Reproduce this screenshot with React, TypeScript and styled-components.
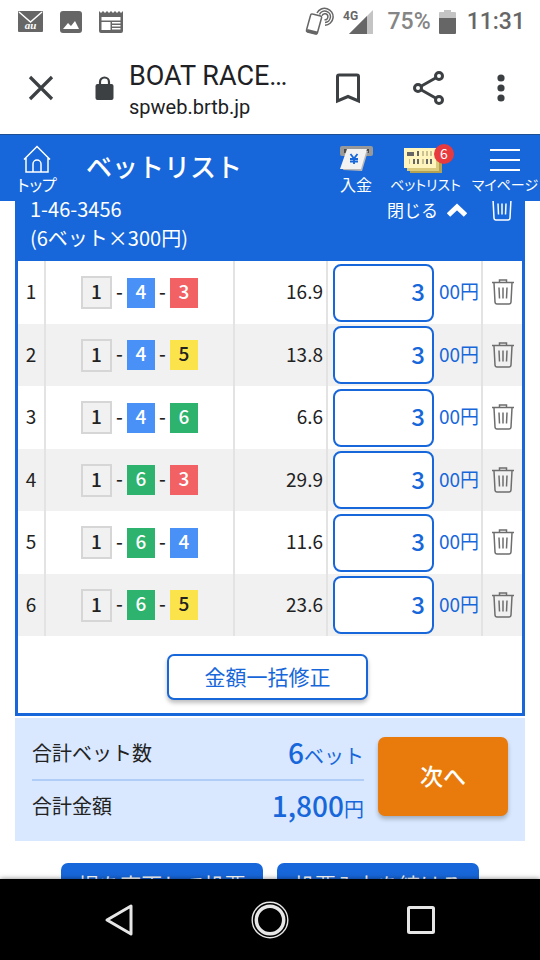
import React, { useState } from 'react';
import styled, { createGlobalStyle } from 'styled-components';

const BLUE = '#1767da';

const Global = createGlobalStyle`
  * { box-sizing: border-box; }
  body { margin: 0; background: #fff; }
  body, button, input {
    font-family: 'Noto Sans CJK JP', 'Noto Sans', sans-serif;
  }
  button { padding: 0; cursor: pointer; }
  svg { display: block; flex: none; }
`;

const Screen = styled.div`
  display: flex;
  flex-direction: column;
  height: 100vh;
  overflow: hidden;
  color: #222;
`;

const StatusBar = styled.div`
  display: flex;
  align-items: center;
  justify-content: space-between;
  height: 43px;
  padding: 0 15px 0 18px;
  flex: none;
  font: 500 23px/28px Roboto, sans-serif;
  color: #666;
`;

const StatusGroup = styled.div<{ $gap: number }>`
  display: flex;
  align-items: center;
  gap: ${(p) => p.$gap}px;
`;

const Percent = styled.span`
  margin-left: 6px;
  color: #858585;
`;

const Clock = styled.span`
  margin-left: 3px;
`;

const BrowserBar = styled.div`
  display: flex;
  align-items: center;
  height: 92px;
  padding: 0 35px 0 24px;
  flex: none;
  border-bottom: 1px solid #1d4f94;
  color: #3c4043;
`;

const IconButton = styled.button`
  display: flex;
  align-items: center;
  justify-content: center;
  border: 0;
  background: none;
  color: inherit;
`;

const Address = styled.div`
  display: flex;
  align-items: center;
  flex: 1;
  min-width: 0;
  gap: 15px;
  margin-left: 37px;
`;

const AddressText = styled.div`
  padding-top: 4px;
  font-family: Roboto, sans-serif;
  color: #202124;
`;

const PageName = styled.div`
  font-size: 27px;
  line-height: 32px;
  white-space: nowrap;
`;

const Domain = styled.div`
  font-size: 20px;
  line-height: 30px;
`;

const BrowserActions = styled.div`
  display: flex;
  align-items: center;
  gap: 51px;
`;

const AppHeader = styled.header`
  display: flex;
  align-items: stretch;
  height: 66px;
  padding-left: 16px;
  flex: none;
  background: ${BLUE};
  color: #fff;
`;

const AppTitle = styled.h1`
  flex: 1;
  margin: 0;
  padding-left: 28px;
  font-size: 26px;
  line-height: 62px;
  font-weight: 500;
  white-space: nowrap;
`;

const HeaderLink = styled.a<{ $width: number; $compact?: boolean }>`
  display: flex;
  flex-direction: column;
  align-items: center;
  justify-content: flex-end;
  width: ${(p) => p.$width}px;
  padding-bottom: 6px;
  color: #fff;
  font-size: ${(p) => (p.$compact ? 14 : 16)}px;
  line-height: 22px;
  font-feature-settings: 'palt';
  text-decoration: none;
  white-space: nowrap;
`;

const IconSlot = styled.span`
  position: relative;
  display: flex;
  align-items: center;
  height: 28px;
`;

const TicketSlot = styled(IconSlot)`
  align-items: flex-end;
  padding-right: 5px;
`;

const Badge = styled.span`
  position: absolute;
  top: -1px;
  right: -7px;
  width: 20px;
  height: 20px;
  border-radius: 50%;
  background: #e63a3e;
  font: 14px/18px 'Noto Sans CJK JP', sans-serif;
  text-align: center;
`;

const Main = styled.main`
  flex: 1;
  min-height: 0;
  overflow: hidden;
  padding: 0 15px;
`;

const Card = styled.section`
  border: 3px solid ${BLUE};
  border-top: 0;
`;

const CardHeader = styled.div`
  display: flex;
  align-items: flex-start;
  height: 60px;
  padding: 0 9px 0 12px;
  background: ${BLUE};
  color: #fff;
`;

const BetName = styled.div`
  display: flex;
  flex-direction: column;
  flex: 1;
  gap: 14px;
  font-size: 20px;
  line-height: 15px;
`;

const CloseButton = styled(IconButton)`
  gap: 9px;
  margin-right: 24px;
  font-size: 17px;
  line-height: 18px;
`;

const DeleteAll = styled(IconButton)`
  height: 21px;
  align-items: flex-end;
`;

const BetTable = styled.table`
  width: 100%;
  table-layout: fixed;
  border-collapse: collapse;
  font-size: 19px;
  line-height: 28px;
`;

const Row = styled.tr`
  height: 63px;
  &:nth-child(even) {
    height: 62px;
    background: #f1f1f1;
  }
`;

const Cell = styled.td<{ $align?: string }>`
  padding: 0;
  text-align: ${(p) => p.$align || 'center'};
  & + & { border-left: 2px solid #e3e3e3; }
`;

const Figure = styled.div`
  padding: 0 3px 3px;
`;

const Combo = styled.div`
  display: flex;
  align-items: center;
  justify-content: center;
`;

const Dash = styled.span`
  width: 15px;
  padding-bottom: 4px;
  font-weight: 500;
  text-align: center;
`;

const palette: Record<string, string> = {
  '1': '#f1f1f1',
  '3': '#f26163',
  '4': '#4990f7',
  '5': '#fbe34b',
  '6': '#2db36d',
};

const Boat = styled.span<{ $boat: string }>`
  width: ${(p) => (p.$boat === '1' ? 31 : 28)}px;
  height: ${(p) => (p.$boat === '1' ? 33 : 30)}px;
  border: ${(p) => (p.$boat === '1' ? '2px solid #d6d6d6' : '0')};
  background: ${(p) => palette[p.$boat]};
  color: ${(p) => (p.$boat === '1' || p.$boat === '5' ? '#222' : '#fff')};
  font-size: 19px;
  font-weight: 500;
  line-height: 26px;
`;

const Amount = styled.label`
  display: flex;
  align-items: center;
  gap: 5px;
  padding-left: 5px;
  color: ${BLUE};
  white-space: nowrap;
`;

const Unit = styled.span`
  padding-bottom: 3px;
`;

const AmountInput = styled.input`
  width: 101px;
  height: 58px;
  padding: 0 7px 4px;
  border: 2px solid ${BLUE};
  border-radius: 8px;
  background: #fff;
  color: ${BLUE};
  font-size: 24px;
  font-weight: 500;
  text-align: right;
  outline: none;
`;

const DeleteButton = styled(IconButton)`
  width: 100%;
  padding-bottom: 1px;
  color: #6e6e6e;
`;

const BulkArea = styled.div`
  display: flex;
  justify-content: center;
  padding: 18px 5px 13px 0;
`;

const BulkButton = styled.button`
  width: 201px;
  height: 46px;
  padding-bottom: 3px;
  border: 2px solid ${BLUE};
  border-radius: 7px;
  background: #fff;
  box-shadow: 0 3px 4px rgba(0, 0, 0, 0.25);
  color: ${BLUE};
  font-size: 21px;
  line-height: 38px;
`;

const Summary = styled.section`
  display: flex;
  align-items: flex-start;
  gap: 14px;
  margin-top: 2px;
  padding: 9px 17px 10px;
  background: #d9e8ff;
`;

const Totals = styled.dl`
  flex: 1;
  margin: 0;
`;

const TotalRow = styled.div`
  display: flex;
  align-items: center;
  justify-content: space-between;
  height: 52px;
  padding-bottom: 2px;
  font-size: 20px;
  & + & { border-top: 2px solid #b0cdf7; }
`;

const TotalValue = styled.dd`
  margin: 0;
  color: ${BLUE};
`;

const Strong = styled.strong`
  font-size: 28px;
  line-height: 40px;
  font-weight: 500;
`;

const NextButton = styled.button`
  width: 130px;
  height: 79px;
  margin-top: 10px;
  padding-bottom: 4px;
  border: 0;
  border-radius: 7px;
  background: #e97b0d;
  box-shadow: 0 3px 4px rgba(0, 0, 0, 0.25);
  color: #fff;
  font-size: 23px;
  font-weight: 500;
`;

const BottomActions = styled.div`
  display: flex;
  justify-content: center;
  gap: 14px;
  padding-top: 22px;
`;

const BlueButton = styled.button`
  width: 202px;
  height: 46px;
  padding-bottom: 4px;
  border: 0;
  border-radius: 7px;
  background: ${BLUE};
  color: #fff;
  font-size: 21px;
  line-height: 40px;
`;

const SystemNav = styled.nav`
  position: relative;
  display: flex;
  align-items: center;
  justify-content: space-around;
  height: 81px;
  padding: 0 45px;
  flex: none;
  background: #000;
  box-shadow: 0 0 5px rgba(0, 0, 0, 0.5);
  color: #e6e6e6;
`;

const MailIcon = () => (
  <svg width="25" height="21" viewBox="0 0 25 21">
    <rect width="25" height="21" rx="1" fill="#666" />
    <path d="M1 1 12.500 11 24 1" fill="none" stroke="#fff" strokeWidth="1.500" />
    <text x="12.500" y="18" textAnchor="middle" fontFamily="Liberation Serif" fontStyle="italic" fontWeight="700" fontSize="11" fill="#fff">au</text>
  </svg>
);

const PictureIcon = () => (
  <svg width="22" height="22" viewBox="0 0 22 22">
    <rect width="22" height="22" rx="3" fill="#666" />
    <path d="M3 18 8 12l3 3 4-5 4 8Z" fill="#fff" />
  </svg>
);

const NewsIcon = () => (
  <svg width="24" height="22" viewBox="0 0 24 22">
    <path d="M0 0l2 2 2-2 2 2 2-2 2 2 2-2 2 2 2-2 2 2 2-2 2 2 2-2V20a2 2 0 0 1-2 2H2a2 2 0 0 1-2-2Z" fill="#666" />
    <path d="M2.500 6h19v3.500h-19zM2.500 11h9v8h-9zM13 11h8.500v1.500H13zM13 14h8.500v1.500H13zM13 17h8.500v1.500H13z" fill="#fff" />
  </svg>
);

const TapIcon = () => (
  <svg width="30" height="30" viewBox="0 0 30 30" fill="none" stroke="#666" strokeWidth="1.500">
    <path d="M7.500 7 15.500 9q1.500.5 1 2l-4 14.500q-.5 2-2 1.500L2.500 25q-1.500-.5-1-2L5.500 8.500q.5-2 2-1.500Z" />
    <path d="m2 23.500 10 2.500" strokeWidth="3" />
    <path d="M12 6a8.500 8.500 0 1 1 8 12.300M14.500 7.500a5.700 5.700 0 1 1 5.500 7.900M17 8.800a3 3 0 1 1 2.500 3.900" />
  </svg>
);

const SignalIcon = () => (
  <svg width="31" height="26" viewBox="0 0 31 26">
    <path d="M30 1v24H6Z" fill="#c4c4c4" />
    <path d="M24 7v18H6Z" fill="#666" />
    <text x="0" y="11" fontFamily="Roboto" fontWeight="700" fontSize="12" fill="#666" stroke="#fff" strokeWidth="2" paintOrder="stroke">4G</text>
  </svg>
);

const BatteryIcon = () => (
  <svg width="17" height="26" viewBox="0 0 17 26">
    <path d="M5 1h7v2h4q1 0 1 1v6H0V4q0-1 1-1h4Z" fill="#c4c4c4" />
    <path d="M0 9h17v15q0 1-1 1H1q-1 0-1-1Z" fill="#666" />
  </svg>
);

const LockIcon = () => (
  <svg width="19" height="25" viewBox="0 0 19 25">
    <rect x="0.500" y="8" width="18" height="16" rx="2" fill="#3c4043" />
    <path d="M5 9V6a4.500 4.500 0 0 1 9 0v3" fill="none" stroke="#3c4043" strokeWidth="2.200" />
  </svg>
);

const HomeIcon = () => (
  <svg width="28" height="30" viewBox="0 0 28 30" fill="none" stroke="#fff" strokeWidth="1.500">
    <path d="M1 15.500 14 2.500l13 13M3 14v14h22V14M10 28v-8a4 4 0 0 1 8 0v8" />
  </svg>
);

const DepositIcon = () => (
  <svg width="33" height="28" viewBox="0 0 33 28">
    <rect y="1" width="33" height="10" rx="2" fill="#999" />
    <rect x="4" y="4" width="25" height="4" fill="#4a4a4a" />
    <path d="m9 5 19 1-6 20-19-1Z" fill="#b8b8b8" />
    <path d="M7 4h20l-6 20H0Z" fill="#f2f2f2" />
    <path d="m10.500 9 3.500 4.500L17.500 9M14 13.500V19M10 14h8M10 16.500h8" fill="none" stroke={BLUE} strokeWidth="1.800" />
  </svg>
);

const TicketIcon = () => (
  <svg width="38" height="25" viewBox="0 0 38 25">
    <path d="M6 4h32v21H6Z" fill="#b3a252" />
    <path d="M3 2h32v21H3Z" fill="#dccb7c" />
    <path d="M0 0h32v20H0Z" fill="#fff5bd" />
    <path d="M3 4h7v4H3zM13 3h2v5h-2zM13 11h2v5h-2zM22 11h2v5h-2zM26 11h2v5h-2zM9 11h2v5H9z" fill="#666" />
    <path d="M18 3h2v5h-2zM22 3h2v5h-2zM26 3h2v5h-2zM5 11h1v5H5zM18 11h2v5h-2z" fill="#cbc294" />
  </svg>
);

const MenuIcon = () => (
  <svg width="32" height="28" viewBox="0 0 32 28" stroke="#fff" strokeWidth="2">
    <path d="M1 5h30M1 15h30M1 25h30" />
  </svg>
);

const TrashIcon = () => (
  <svg width="22" height="28" viewBox="0 0 22 28" fill="none" stroke="currentColor" strokeWidth="1.500">
    <path d="M0 4.500h22M7.500 4V2h7v2M2 5l1 19q.2 2 2 2h12q1.800 0 2-2l1-19M7 9.500l.5 11M11 9.500v11M15 9.500l-.5 11" />
  </svg>
);

const bets = [
  { boats: ['1', '4', '3'], odds: '16.9' },
  { boats: ['1', '4', '5'], odds: '13.8' },
  { boats: ['1', '4', '6'], odds: '6.6' },
  { boats: ['1', '6', '3'], odds: '29.9' },
  { boats: ['1', '6', '4'], odds: '11.6' },
  { boats: ['1', '6', '5'], odds: '23.6' },
];

export default function App() {
  const [amounts, setAmounts] = useState(bets.map(() => '3'));

  return (
    <Screen>
      <Global />
      <StatusBar>
        <StatusGroup $gap={17}>
          <MailIcon />
          <PictureIcon />
          <NewsIcon />
        </StatusGroup>
        <StatusGroup $gap={8}>
          <TapIcon />
          <SignalIcon />
          <Percent>75%</Percent>
          <BatteryIcon />
          <Clock>11:31</Clock>
        </StatusGroup>
      </StatusBar>

      <BrowserBar>
        <IconButton aria-label="閉じる">
          <svg width="34" height="34" viewBox="0 0 34 34" stroke="currentColor" strokeWidth="3.200">
            <path d="m6 5 22 22M28 5 6 27" />
          </svg>
        </IconButton>
        <Address>
          <LockIcon />
          <AddressText>
            <PageName>BOAT RACE…</PageName>
            <Domain>spweb.brtb.jp</Domain>
          </AddressText>
        </Address>
        <BrowserActions>
          <IconButton aria-label="ブックマーク">
            <svg width="26" height="32" viewBox="0 0 26 32" fill="none" stroke="currentColor" strokeWidth="3">
              <path d="M2.500 28V3.500Q2.500 2 4 2h18q1.500 0 1.500 1.500V28L13 23.500Z" />
            </svg>
          </IconButton>
          <IconButton aria-label="共有">
            <svg width="34" height="36" viewBox="0 0 34 36" fill="none" stroke="currentColor" strokeWidth="3">
              <circle cx="6" cy="17" r="3.500" />
              <circle cx="27" cy="5" r="3.500" />
              <circle cx="27" cy="29" r="3.500" />
              <path d="m9 15.200 15-8.400M9 18.800l15 8.400" />
            </svg>
          </IconButton>
          <IconButton aria-label="メニュー">
            <svg width="8" height="30" viewBox="0 0 8 30" fill="currentColor">
              <circle cx="4" cy="4" r="3.600" />
              <circle cx="4" cy="14" r="3.600" />
              <circle cx="4" cy="24" r="3.600" />
            </svg>
          </IconButton>
        </BrowserActions>
      </BrowserBar>

      <AppHeader>
        <HeaderLink href="#top" $width={42}>
          <IconSlot><HomeIcon /></IconSlot>
          トップ
        </HeaderLink>
        <AppTitle>ベットリスト</AppTitle>
        <HeaderLink href="#deposit" $width={50}>
          <IconSlot><DepositIcon /></IconSlot>
          入金
        </HeaderLink>
        <HeaderLink href="#bets" $width={89} $compact>
          <TicketSlot>
            <TicketIcon />
            <Badge>6</Badge>
          </TicketSlot>
          ベットリスト
        </HeaderLink>
        <HeaderLink href="#mypage" $width={70} $compact>
          <IconSlot><MenuIcon /></IconSlot>
          マイページ
        </HeaderLink>
      </AppHeader>

      <Main>
        <Card>
          <CardHeader>
            <BetName>
              <span>1-46-3456</span>
              <span>(6ベット×300円)</span>
            </BetName>
            <CloseButton>
              閉じる
              <svg width="20" height="14" viewBox="0 0 20 14" fill="none" stroke="#fff" strokeWidth="5">
                <path d="m1.500 12 8.500-8 8.500 8" />
              </svg>
            </CloseButton>
            <DeleteAll aria-label="すべて削除"><TrashIcon /></DeleteAll>
          </CardHeader>
          <BetTable>
            <colgroup>
              <col width="27" />
              <col />
              <col width="93" />
              <col width="155" />
              <col width="40" />
            </colgroup>
            <tbody>
              {bets.map((bet, i) => (
                <Row key={i}>
                  <Cell><Figure>{i + 1}</Figure></Cell>
                  <Cell>
                    <Combo>
                      {bet.boats.map((boat, n) => (
                        <React.Fragment key={n}>
                          {n > 0 && <Dash>-</Dash>}
                          <Boat $boat={boat}>{boat}</Boat>
                        </React.Fragment>
                      ))}
                    </Combo>
                  </Cell>
                  <Cell $align="right"><Figure>{bet.odds}</Figure></Cell>
                  <Cell>
                    <Amount>
                      <AmountInput
                        inputMode="numeric"
                        value={amounts[i]}
                        onChange={(e) =>
                          setAmounts(amounts.map((a, n) => (n === i ? e.target.value : a)))
                        }
                      />
                      <Unit>00円</Unit>
                    </Amount>
                  </Cell>
                  <Cell>
                    <DeleteButton aria-label="削除"><TrashIcon /></DeleteButton>
                  </Cell>
                </Row>
              ))}
            </tbody>
          </BetTable>
          <BulkArea>
            <BulkButton>金額一括修正</BulkButton>
          </BulkArea>
        </Card>

        <Summary>
          <Totals>
            <TotalRow>
              <dt>合計ベット数</dt>
              <TotalValue><Strong>6</Strong>ベット</TotalValue>
            </TotalRow>
            <TotalRow>
              <dt>合計金額</dt>
              <TotalValue><Strong>1,800</Strong>円</TotalValue>
            </TotalRow>
          </Totals>
          <NextButton>次へ</NextButton>
        </Summary>

        <BottomActions>
          <BlueButton>場を変更して投票</BlueButton>
          <BlueButton>投票入力を続ける</BlueButton>
        </BottomActions>
      </Main>

      <SystemNav>
        <IconButton aria-label="戻る">
          <svg width="30" height="34" viewBox="0 0 30 34" fill="none" stroke="currentColor" strokeWidth="3" strokeLinejoin="round">
            <path d="M27 3v28L3 17Z" />
          </svg>
        </IconButton>
        <IconButton aria-label="ホーム">
          <svg width="38" height="38" viewBox="0 0 38 38" fill="none" stroke="currentColor">
            <circle cx="19" cy="19" r="17.800" strokeWidth="1.400" />
            <circle cx="19" cy="19" r="13.700" strokeWidth="3.500" />
          </svg>
        </IconButton>
        <IconButton aria-label="最近使ったアプリ">
          <svg width="30" height="30" viewBox="0 0 30 30" fill="none" stroke="currentColor" strokeWidth="3">
            <rect x="2.500" y="2.500" width="25" height="25" rx="1" />
          </svg>
        </IconButton>
      </SystemNav>
    </Screen>
  );
}
